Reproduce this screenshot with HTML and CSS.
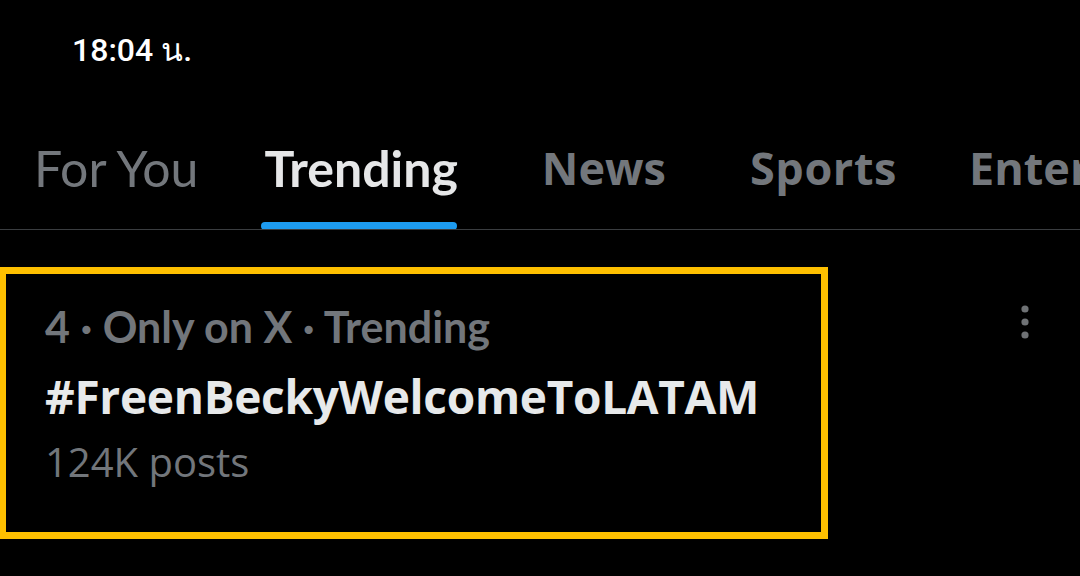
FILE: index.html
```html
<!DOCTYPE html>
<html>
<head>
<meta charset="utf-8">
<link rel="stylesheet" href="styles.css">
</head>
<body>
<div class="screen">
  <div class="status"><span class="time">18:04 น.</span></div>
  <nav class="tabs">
    <div class="tab">For You</div>
    <div class="tab active">Trending<span class="bar"></span></div>
    <div class="tab alt">News</div>
    <div class="tab alt sports">Sports</div>
    <div class="tab alt last">Entertainment</div>
  </nav>
  <div class="row">
    <div class="card">
      <div class="meta">4 · Only on X · Trending</div>
      <div class="tag">#FreenBeckyWelcomeToLATAM</div>
      <div class="count">124K posts</div>
    </div>
    <div class="more">
      <svg width="10" height="36" viewBox="0 0 10 36"><circle cx="5" cy="5" r="3.6" fill="#6f7275"/><circle cx="5" cy="18" r="3.6" fill="#6f7275"/><circle cx="5" cy="31" r="3.6" fill="#6f7275"/></svg>
    </div>
  </div>
</div>
</body>
</html>
```
FILE: styles.css
```css
html, body { margin: 0; padding: 0; background: #000; }
.screen { width: 1080px; height: 576px; overflow: hidden; background: #000; font-family: Lato, "Noto Sans", sans-serif; }
.status { height: 90px; padding-left: 72px; display: flex; align-items: flex-start; }
.time { margin-top: 30px; color: #fff; font-family: Roboto, "Noto Sans", "DejaVu Sans", sans-serif; font-size: 32px; font-weight: 500; line-height: 40px; }
.tabs { display: flex; height: 140px; box-sizing: border-box; border-bottom: 1px solid #3a3d40; white-space: nowrap; padding-left: 34px; overflow: hidden; }
.tab { position: relative; color: #73777c; font-size: 50px; font-weight: 400; padding-top: 50px; line-height: 56px; margin-right: 66px; flex: none; }
.tab.active { color: #e6e7e8; font-weight: 700; margin-right: 84px; }
.tab.alt { font-family: "Open Sans", "Noto Sans", sans-serif; font-weight: 700; font-size: 45px; letter-spacing: 0; margin-right: 84px; }
.tab.sports { letter-spacing: 0.6px; margin-right: 72px; }
.tab.last { margin-right: 0; }
.bar { position: absolute; left: -3px; right: 1px; bottom: -1px; height: 8px; border-radius: 4px; background: #1d9bf0; }
.row { display: flex; padding-top: 37px; }
.card { width: 828px; height: 272px; border: 7px solid #fec000; border-left-width: 6px; padding: 29px 0 0 39px; box-sizing: border-box; flex: none; }
.meta { color: #72767b; font-size: 43px; font-weight: 700; line-height: 48px; }
.tag { color: #e7e9ea; font-family: "Open Sans", "Noto Sans", sans-serif; font-size: 46px; font-weight: 700; line-height: 50px; margin-top: 20px; letter-spacing: -0.3px; }
.count { color: #72767b; font-family: "Open Sans", "Noto Sans", sans-serif; font-size: 40px; line-height: 46px; margin-top: 18px; }
.more { margin-left: auto; margin-right: 50px; padding-top: 37px; }
```
